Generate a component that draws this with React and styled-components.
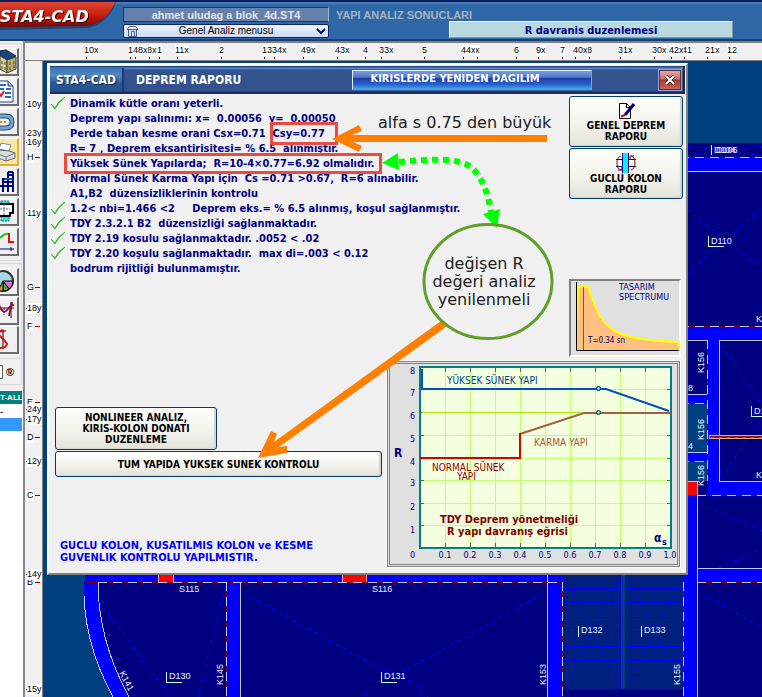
import styled, { createGlobalStyle } from "styled-components";

const tahoma = `"DejaVu Sans Condensed", "DejaVu Sans", sans-serif`;
const arial = `"Liberation Sans", Arial, sans-serif`;

const GlobalStyle = createGlobalStyle`
  * {
    box-sizing: border-box;
  }

  body {
    margin: 0;
    background: #004080;
    font-family: ${tahoma};
    font-size: 11px;
  }

  button, select {
    font-family: inherit;
  }
`;

const Page = styled.div`
  display: flex;
  flex-direction: column;
  height: 100vh;
  min-height: 600px;
  overflow: hidden;
`;

/* ---------- header ---------- */

const Header = styled.header`
  display: flex;
  height: 41px;
  flex: none;
  background: linear-gradient(#0a1e5e 0 2px, #4a7ab0 2px 4px, #2e68a6 4px 39px, #1d3f6e 39px);
`;

const Logo = styled.svg`
  width: 116px;
  height: 39px;
  flex: none;

  text {
    fill: #fff;
    font: italic bold 16px "DejaVu Sans", sans-serif;
    filter: drop-shadow(1px 1px 0 #400000);
  }
`;

const FileColumn = styled.div`
  display: flex;
  flex-direction: column;
  gap: 2px;
  width: 206px;
  margin-left: 7px;
  padding-top: 7px;
`;

const FileName = styled.div`
  height: 15px;
  background: #6680ac;
  border: 1px solid #1c3a70;
  border-right-color: #a0b4d0;
  color: #e0e4ea;
  font: bold 11px/14px ${arial};
  text-align: center;
`;

const MenuBox = styled.div`
  position: relative;
  height: 14px;

  svg {
    position: absolute;
    top: 1px;
    pointer-events: none;
  }

  svg:first-of-type {
    left: 3px;
  }

  svg:last-of-type {
    right: 2px;
  }
`;

const MenuSelect = styled.select`
  display: block;
  width: 100%;
  height: 14px;
  padding: 0;
  appearance: none;
  border: 1px solid #0a2468;
  border-radius: 2px;
  background: linear-gradient(#f0f4fd, #ccd8f4);
  color: #000;
  font: 10px/12px ${arial};
  text-align: center;
  text-align-last: center;
`;

const ResultColumn = styled.div`
  display: flex;
  flex: 1;
  flex-direction: column;
  padding: 9px 29px 0 7px;
`;

const ResultTitle = styled.div`
  height: 12px;
  color: #a8b2c0;
  font: bold 11px/12px ${arial};
`;

const ResultBox = styled.div`
  height: 17px;
  margin-left: 113px;
  background: #b9d8e0;
  border: 1px solid #f4fafa;
  border-right-color: #8098a0;
  border-bottom-color: #8098a0;
  color: #000080;
  font-size: 11px;
  font-weight: bold;
  line-height: 18px;
  text-align: center;
`;

/* ---------- frame around the drawing ---------- */

const Main = styled.div`
  display: grid;
  grid-template-columns: 25px 18px minmax(0, 1fr);
  grid-template-rows: 20px minmax(0, 1fr);
  flex: 1;
  min-height: 0;
`;

const Sidebar = styled.aside`
  display: flex;
  flex-direction: column;
  grid-row: 1 / 3;
  overflow: hidden;
  background: #f0f0f0;
  border-right: 2px solid #86868e;
`;

const ToolGroup = styled.div`
  display: flex;
  flex-direction: column;
  gap: ${props => props.$gap || 2}px;
  width: 22px;
  padding: 4px 0;
  margin-top: 2px;
  border: 1px solid #d8d8d8;
  border-left: 0;
`;

const ToolButton = styled.button`
  width: 19px;
  height: 28px;
  padding: 0;
  overflow: hidden;
  background: ${props => (props.$active ? "#f6e7a4" : "#f0f0f0")};
  border: 2px solid ${props => (props.$active ? "#e0b030" : "#6c6c6c")};
  border-top: 1px solid #fff;
  border-left: 0;

  svg {
    display: block;
  }
`;

const SmallTools = styled.div`
  display: flex;
  align-items: center;
  gap: 3px;
  width: 22px;
  height: 26px;
  border: 1px solid #d8d8d8;
  border-width: 0 1px 1px 0;
  color: #000;
  font: bold 11px/12px ${arial};
`;

const StepBox = styled.button`
  width: 3px;
  height: 14px;
  padding: 0;
  background: #fff;
  border: 1px solid #606060;
  border-left: 0;
`;

const TabLabel = styled.div`
  width: 22px;
  height: 13px;
  margin-top: 6px;
  background: #008080;
  color: #fff;
  font: bold 8px/13px ${arial};
  text-align: right;
  white-space: nowrap;
`;

const LayerList = styled.ul`
  flex: 1;
  margin: 1px 0 0;
  padding: 0;
  background: #fff;
  list-style: none;
`;

const LayerItem = styled.li`
  width: 22px;
  height: 13px;
  background: ${props => (props.$selected ? "#3399ff" : "#fff")};
  color: #000;
  font: 10px/13px ${arial};
`;

const TopRuler = styled.div`
  position: relative;
  grid-column: 2 / 4;
  overflow: hidden;
  background: #f0f0f0;
  border-top: 2px solid #808080;
  border-bottom: 1px solid #808080;
`;

const LeftRuler = styled.div`
  position: relative;
  overflow: hidden;
  background: #f0f0f0;
  border-right: 1px solid #808080;
`;

const Mark = styled.span`
  position: absolute;
  background: #fff;
  color: #000;
  font: 9px/11px ${arial};
`;

const TopMark = styled(Mark)`
  top: 2px;

  &::after {
    content: "";
    position: absolute;
    top: 12px;
    left: 2px;
    width: 1px;
    height: 2px;
    background: #800000;
  }
`;

const LeftMark = styled(Mark)`
  left: 2px;

  &::after {
    content: "";
    position: absolute;
    top: 5px;
    left: ${props => (props.$axis ? "8px" : "-1px")};
    width: ${props => (props.$axis ? "5px" : "1px")};
    height: 1px;
    background: #800000;
  }
`;

const Canvas = styled.main`
  position: relative;
  overflow: hidden;
  padding: 2px 74px 0 4px;
  background: #004080;
`;

const Layer = styled.svg`
  position: absolute;
  inset: 0;
  width: 100%;
  height: 100%;
  pointer-events: none;
`;

/* ---------- dialog ---------- */

const Dialog = styled.section`
  position: relative;
  padding: 1px 1px 6px;
  background: #f0f0f0;
  border: 2px solid #fff;
  border-right-color: #808080;
  border-bottom-color: #808080;
`;

const TitleBar = styled.div`
  display: flex;
  align-items: center;
  height: 28px;
  background: linear-gradient(#24447c 0 1px, #5c96dc 2px, #34528e 4px 25px, #1e2e5c 26px);
  border-right: 2px solid #20284c;
`;

const Brand = styled.div`
  width: 74px;
  height: 24px;
  background: linear-gradient(#3c74b4, #5088c4 30%, #2c5c9c 60%, #24508c);
  border-right: 2px solid #20386c;
  color: #fff;
  font-size: 12px;
  font-weight: bold;
  line-height: 25px;
  text-align: center;
  text-shadow: 1px 1px 1px #102040;
`;

const Title = styled.h1`
  flex: 1;
  margin: 0 0 0 12px;
  color: #fff;
  font-size: 12px;
  font-weight: bold;
`;

const Banner = styled.button`
  width: 240px;
  height: 20px;
  margin-right: 66px;
  padding: 0 34px 2px 0;
  border: 1px solid #e8eef8;
  border-right-color: #909cb0;
  border-bottom-color: #909cb0;
  background: linear-gradient(#7c9ce0, #5078c8 35%, #1c3ca4 40%, #2c60cc 75%, #38a8e8);
  color: #fff;
  font-size: 11px;
  font-weight: bold;
  line-height: 16px;
  text-align: center;
`;

const CloseButton = styled.button`
  display: grid;
  place-items: center;
  width: 24px;
  height: 22px;
  margin-right: 1px;
  padding: 0;
  border: 1px solid #8ca0f0;
  background: linear-gradient(#e0b0a4, #c87468 45%, #b03828 50%, #c86c58);
  box-shadow: inset 0 0 0 1px #5c3040;
`;

const Upper = styled.div`
  display: flex;
  justify-content: space-between;
  padding: 2px 2px 0 0;
`;

const Report = styled.ul`
  flex: 1;
  margin: 0;
  padding: 0;
  color: #000080;
  font-size: 11px;
  font-weight: bold;
  line-height: 15px;
  list-style: none;
`;

const ReportLine = styled.li`
  display: grid;
  grid-template-columns: 20px 1fr;
  height: 15px;
  white-space: pre;

  svg {
    overflow: visible;
  }
`;

const Side = styled.div`
  display: flex;
  flex-direction: column;
  gap: 1px;
  width: 114px;
`;

const PushButton = styled.button`
  display: flex;
  flex-direction: column;
  align-items: center;
  justify-content: center;
  width: ${props => props.$width};
  height: ${props => props.$height}px;
  padding: 0;
  border: 1px solid #003c74;
  border-radius: 3px;
  background: linear-gradient(#fefefd, #f2f2ec 60%, #e2e2d8);
  box-shadow: inset -2px -1px 1px #d4d4c8;
  color: #000;
  font-size: 10px;
  font-weight: bold;
  line-height: 11px;
  white-space: pre-line;
`;

const Spectrum = styled.figure`
  width: 112px;
  height: 78px;
  margin: 79px 0 0;
  background: #e0e0e0;
  border: 2px solid #808080;
  border-right-color: #fff;
  border-bottom-color: #fff;
`;

const Lower = styled.div`
  display: flex;
  justify-content: space-between;
  padding: 4px 5px 0 5px;
`;

const Actions = styled.div`
  display: flex;
  flex-direction: column;
  gap: 1px;
  padding-top: 46px;
`;

const Notice = styled.p`
  margin: 62px 0 0 5px;
  color: #0000ff;
  font-size: 11px;
  font-weight: bold;
  line-height: 12px;
`;

const ChartPanel = styled.figure`
  width: 293px;
  height: 206px;
  margin: 0;
  background: #e0e0e0;
  border: 3px double #808080;
  outline: 1px solid #fff;
`;

const Drawing = styled.svg`
  display: block;
  overflow: visible;

  text {
    font-family: ${tahoma};
  }
`;

const NoteText = styled.text`
  fill: #202020;
  font: 16px "DejaVu Sans", sans-serif;
`;

const PlanText = styled.text`
  fill: #e8f0f8;
  font: 9px ${arial};
`;

const topMarks = [
    [84, "10x"], [157, "1"], [147, "8x"], [133, "48x"], [128, "1"], [175, "11x"], [219, "2"],
    [272, "34x"], [262, "13"], [301, "49x"], [335, "43x"], [363, "4"], [379, "33x"], [422, "5"],
    [475, "x"], [461, "44x"], [514, "6"], [536, "9x"], [560, "7"], [587, "8"], [573, "40x"],
    [618, "31x"], [652, "30x"], [682, "41"], [669, "42x"], [705, "21x"], [727, "12"],
];

const leftMarks = [
    [104, "10y"], [133, "23y"], [142, "16y"], [157, "H"], [213, "11y"], [287, "G"], [308, "18y"],
    [326, "F"], [402, "E"], [409, "24y"], [419, "17y"], [437, "D"], [461, "12y"], [495, "C"],
    [582, "B"], [574, "14y"], [689, "15y"],
];

const report = [
    [true, "Dinamik kütle oranı yeterli."],
    [false, "Deprem yapı salınımı: x=  0.00056  y=  0.00050"],
    [false, "Perde taban kesme orani Csx=0.71  Csy=0.77"],
    [false, "R= 7 , Deprem eksantirisitesi= % 6.5  alınmıştır."],
    [false, "Yüksek Sünek Yapılarda;  R=10-4×0.77=6.92 olmalıdır."],
    [false, "Normal Sünek Karma Yapı için  Cs =0.71 >0.67,  R=6 alınabilir."],
    [false, "A1,B2  düzensizliklerinin kontrolu"],
    [true, "1.2< nbi=1.466 <2     Deprem eks.= % 6.5 alınmış, koşul sağlanmıştır."],
    [true, "TDY 2.3.2.1 B2  düzensizliği sağlanmaktadır."],
    [true, "TDY 2.19 kosulu sağlanmaktadır. .0052 < .02"],
    [true, "TDY 2.20 koşulu sağlanmaktadır.  max di=.003 < 0.12"],
    [false, "bodrum rijitliği bulunmamıştır."],
];

const tools = [
    { name: "Bina", art: <>
        <path d="M0 2 6 1 16 7 7 11 0 6Z" fill="#1c4480" stroke="#102040" />
        <path d="M0 7 7 11V24L0 20Z" fill="#d8d0a0" stroke="#404030" />
        <path d="M7 11 16 8V20L7 24Z" fill="#b8ac70" stroke="#404030" />
        <path d="M2 12v3M5 13v3M2 17v3M5 18v3M10 13v3M14 12v3M10 18v3M14 16v3" stroke="#504830" />
    </> },
    { name: "Rapor", art: <>
        <path d="M-2 2H8L13 7V23H-2Z" fill="#fff" stroke="#204080" />
        <path d="M8 2v5h5" fill="#a0b8e0" stroke="#204080" />
        <path d="M0 6h6M0 10h4M6 10h5M5 14h6M5 18h6" stroke="#3068b8" strokeWidth="2" />
        <path d="M-1 14 1 17 4 12" fill="none" stroke="#e02020" strokeWidth="2" />
    </> },
    { name: "Ekle", art: <>
        <path d="M-4 7H6Q12 7 12 13T6 19H-4" fill="none" stroke="#204c74" strokeWidth="5" />
        <path d="M-4 7H6Q12 7 12 13T6 19H-4" fill="none" stroke="#70a8d0" strokeWidth="3" />
        <path d="M0 13h2M4 13h2" stroke="#e08010" strokeWidth="2" />
    </> },
    { name: "Yazdir", active: true, art: <>
        <path d="M1 4 11 6 9 12 -1 10Z" fill="#fff" stroke="#808890" />
        <path d="M-2 11 9 12 15 14V19L6 22 -2 19Z" fill="#d8dce0" stroke="#606870" />
        <path d="M-2 15 6 18 15 14M6 18V22" fill="none" stroke="#707880" />
    </> },
    { name: "Cerceve", art: <>
        <path d="M3 23V10M8 23V3M13 23V3M8 3h5M2 10h11M0 17h13M8 6h5M3 13h10" fill="none" stroke="#000080" strokeWidth="2" />
        <path d="M5 10h7" stroke="#00c0e0" />
    </> },
    { name: "Birlesim", art: <>
        <path d="M1 2h8v20H1Z" fill="#30e0e8" stroke="#008080" strokeDasharray="2 1" />
        <path d="M-2 5H13V14H10V17H-2" fill="#fff" stroke="#000" strokeWidth="2" />
        <path d="M4 5v11M0 10h10" stroke="#606060" strokeDasharray="2 1" />
    </> },
    { name: "Diyagram", art: <>
        <path d="M0 9Q5 4 9 5" fill="none" stroke="#20c020" strokeWidth="2" />
        <path d="M9 4V13H14" fill="none" stroke="#e01010" strokeWidth="2" />
        <path d="M0 20H14M11 18v4" stroke="#000090" />
    </> },
    { name: "Pasta grafik", art: <>
        <circle cx="3" cy="12" r="10" fill="#a8d8e8" stroke="#303030" strokeWidth="2" />
        <path d="M3 12H13Q13 17 9 20Z" fill="#e868e8" stroke="#000" />
        <path d="M3 12 9 20Q7 22 3 22Z" fill="#40b040" stroke="#000" />
        <path d="M3 12V22H-2Z" fill="#f09020" stroke="#000" />
    </> },
    { name: "Moment", art: <>
        <path d="M0 10H14M11 4V20" stroke="#1010a0" />
        <path d="M-1 7Q3 17 7 12T14 7M9 18 12 4" fill="none" stroke="#a01020" strokeWidth="2" />
        <path d="M4 10V17" stroke="#2020ff" strokeDasharray="2 1" />
    </> },
    { name: "Egri", art: <>
        <path d="M3 3V22M1 4H6" stroke="#000" />
        <path d="M3 3Q-4 5 1 10T7 17Q6 21 0 21" fill="none" stroke="#e01010" strokeWidth="2" />
    </> },
];

const curveX = [0.1, 0.2, 0.3, 0.4, 0.5, 0.6, 0.7, 0.8, 0.9];
const gridY = [28, 51, 74, 97, 119, 142, 164];
const stairs = [588, 602, 617, 631, 646, 660, 675, 689];

function ToolBar({ items, gap }) {
    return (
        <ToolGroup $gap={gap}>
            {items.map(tool => (
                <ToolButton key={tool.name} aria-label={tool.name} $active={tool.active}>
                    <svg width="17" height="25" viewBox="0 0 17 25">{tool.art}</svg>
                </ToolButton>
            ))}
        </ToolGroup>
    );
}

// Floor plan, drawn in window coordinates
function Plan() {
    return (
        <Layer aria-hidden="true">
            <g transform="translate(-43 -61)" fill="none" shapeRendering="crispEdges">
                <path d="M680 143H2000V2000H680Z" fill="#000080" />
                <path d="M680 158H2000V171H680ZM680 327H2000V340H680ZM707 327h12V495h-12ZM680 394h27v9h-27ZM680 452h27v9h-27ZM719 481H2000V495H719Z" fill="#0000ff" />
                <path d="M680 404h27v48h-27ZM680 462h27v19h-27Z" fill="#004080" />
                <path d="M680 482h17V575h-17ZM697 568H2000V582H697ZM683 575h14V2000h-14Z" fill="#0000ff" />
                <path d="M680 482h17v13h-17Z" fill="#ff0000" />
                <path d="M98 582H683V2000H800L129 697Q98 640 98 582Z" fill="#000080" />
                <path d="M85 570H683V582H85ZM226 582h14V2000h-14ZM547 575h15V2000h-15Z" fill="#0000ff" />
                <path d="M84 582Q82 640 113 697H129Q98 640 98 582Z" fill="#0000ff" />
                <path d="M84 582Q82 640 113 697M129 697Q98 640 98 582" stroke="#c0c8ff" />
                <path d="M158 570h15v12h-15ZM342 570h24v12h-24Z" fill="#ff0000" stroke="#ffa0a0" />
                <path d="M563 570h120V689H563Z" fill="#002080" />
                <path d="M621 570h4V689h-4Z" fill="#004080" />
                <g stroke="#0000ff">
                    {stairs.map(y => <path key={y} d={`M563 ${y + 0.5}h57M626 ${y + 0.5}h57`} />)}
                </g>
                <path d="M620.5 570V689M625.5 570V689" stroke="#0000d0" />
                <g stroke="#c0c8ff">
                    <path d="M680 171.5H2000M680 340.5h27M719.5 481.5V340.5H2000M719 481.5H2000M680 394.5h27M680 452.5h27M680 481.5h17V2000M697 568.5H2000M240.5 582V2000M547.5 575V2000" />
                    <path d="M680 157.5H2000M680 326.5H2000M707.5 340V481M680 403.5h27M680 461.5h27M697 495.5H2000M85 582.5H562M697 582.5H2000M226.5 582V2000M562.5 582V2000M683.5 582V2000" stroke="#800000" />
                    <path d="M680 157.5H2000M680 326.5H2000M707.5 340V481M680 403.5h27M680 461.5h27M697 495.5H2000M98 582.5H562M697 582.5H2000M226.5 582V2000M562.5 582V2000M683.5 582V2000" strokeDasharray="9 6" />
                </g>
                <g stroke="#0000ff" strokeDasharray="4 4">
                    <path d="M680 204 762 268M680 280 762 208M688 146 762 156M688 156 762 146M721 345 762 405M721 478 762 418M700 504 762 531M718 568 762 549" />
                    <path d="M99 601 170 697M225 586 198 697M244 593 388 673 362 697M545 593 400 673 428 697M701 593 762 627" />
                    <path d="M565 580 618 686M618 580 565 686M628 580 681 686M681 580 628 686" />
                </g>
                <path d="M709.5 435.5H2000V438.5H709.5Z" fill="#901010" stroke="#d8b090" />
                <path d="M711 437H2000" stroke="#ff2020" strokeDasharray="3 5" />
                <g stroke="#c0ffff">
                    <path d="M708.5 236V246.5H724M711.5 145V155M751.5 406V416.5H762M166.5 672V682.5H182M381.5 672V682.5H397M578.5 626V637M641.5 626V637" />
                </g>
            </g>
            <g transform="translate(-43 -61)">
                <PlanText x="711" y="244">D110</PlanText>
                <PlanText x="714" y="153">D104</PlanText>
                <PlanText x="716" y="153">D106</PlanText>
                <PlanText x="754" y="414">D111</PlanText>
                <PlanText x="756" y="322">K157</PlanText>
                <PlanText x="756" y="478">K157</PlanText>
                <PlanText x="688" y="391">8</PlanText>
                <PlanText x="688" y="449">4</PlanText>
                <PlanText x="179" y="592">S115</PlanText>
                <PlanText x="372" y="592">S116</PlanText>
                <PlanText x="169" y="679">D130</PlanText>
                <PlanText x="384" y="679">D131</PlanText>
                <PlanText x="581" y="633">D132</PlanText>
                <PlanText x="644" y="633">D133</PlanText>
                <PlanText transform="translate(704 373) rotate(-90)">K156</PlanText>
                <PlanText transform="translate(704 440) rotate(-90)">K156</PlanText>
                <PlanText transform="translate(704 486) rotate(-90)">K156</PlanText>
                <PlanText transform="translate(223 685) rotate(-90)">K145</PlanText>
                <PlanText transform="translate(546 685) rotate(-90)">K153</PlanText>
                <PlanText transform="translate(680 685) rotate(-90)">K155</PlanText>
                <PlanText transform="translate(119 673) rotate(62)">K141</PlanText>
            </g>
        </Layer>
    );
}

// Markup drawn over the dialog: boxes, arrows and notes
function Notes() {
    return (
        <Layer>
            <g transform="translate(-43 -61)" fill="none">
                <g stroke="#ea4a40" strokeWidth="3">
                    <rect x="271.5" y="123.5" width="65" height="20" />
                    <rect x="65.5" y="154.5" width="315" height="18" />
                </g>
                <g fill="#ff8000">
                    <path d="M332 139 359 125 362 131 352 135H547V142H353L362 146 359 152Z" />
                    <path d="M258 458 271 431 277 434 274 442 441 321 446 327 279 447 287 446V453Z" />
                </g>
                <path d="M399 162 C430 159 462 157 473 169 C485 181 489 200 491 212" stroke="#d4d4d4" strokeWidth="6" strokeDasharray="6 5" transform="translate(2 2)" />
                <path d="M399 162 C430 159 462 157 473 169 C485 181 489 200 491 212" stroke="#00ff00" strokeWidth="6" strokeDasharray="6 5" />
                <path d="M382 163 398 153 399 170ZM497 228 483 214 500 209Z" fill="#00ff00" />
                <ellipse cx="488" cy="281.5" rx="64" ry="57" stroke="#60a028" strokeWidth="3" />
            </g>
            <g transform="translate(-43 -61)">
                <NoteText x="378" y="128">alfa s 0.75 den büyük</NoteText>
                <NoteText x="484" y="269" textAnchor="middle">değişen R</NoteText>
                <NoteText x="484" y="287" textAnchor="middle">değeri analiz</NoteText>
                <NoteText x="484" y="305" textAnchor="middle">yenilenmeli</NoteText>
            </g>
        </Layer>
    );
}

function SpectrumChart() {
    return (
        <Spectrum>
            <Drawing width="108" height="74">
                <path d="M6 69V39L7 6H17Q21 20 28 34Q37 48 50 53Q70 60 108 61V69Z" fill="#ffc080" />
                <path d="M6 39 7 6H17Q21 20 28 34Q37 48 50 53Q70 60 108 61V69" fill="none" stroke="#ffff00" strokeWidth="2" />
                <path d="M5.5 1V69.5H108" fill="none" stroke="#000" />
                <path d="M12.5 6V69" stroke="#c04000" />
                <g fill="#000080" fontSize="9">
                    <text x="48" y="9">TASARIM</text>
                    <text x="48" y="19">SPECTRUMU</text>
                    <text x="17" y="62" fontSize="8">T=0.34 sn</text>
                </g>
            </Drawing>
        </Spectrum>
    );
}

function BehaviourChart() {
    return (
        <ChartPanel>
            <Drawing width="287" height="200">
                <rect x="30" y="3" width="251" height="181" fill="#f4ffe0" />
                <g stroke="#c0ff70">
                    {curveX.map(v => <path key={v} d={`M${30.5 + v * 250} 4V183`} />)}
                    {gridY.map(y => <path key={y} d={`M31 ${y - 2.5}H280`} />)}
                </g>
                <g stroke="#606060">
                    {curveX.map(v => <path key={v} d={`M${30.5 + v * 250} 4v4M${30.5 + v * 250} 179v4`} />)}
                    {gridY.map(y => <path key={y} d={`M31 ${y - 2.5}h3M277 ${y - 2.5}h3`} />)}
                </g>
                <path d="M32 48.5H190" stroke="#a8e810" />
                <rect x="30" y="3" width="251" height="181" fill="none" stroke="#008080" strokeWidth="2" />
                <g fill="none" strokeWidth="2">
                    <path d="M32 5V25H216L279 47" stroke="#0050c0" />
                    <path d="M130 70 194 49H281" stroke="#a06040" />
                    <path d="M30 94H130V69" stroke="#d80000" />
                </g>
                <circle cx="208.5" cy="24.5" r="2" fill="#40ffff" stroke="#000080" />
                <circle cx="208.5" cy="48.5" r="2" fill="#40ffff" stroke="#402020" />
                <g fontSize="10">
                    <text x="57" y="20" fill="#004080">YÜKSEK SÜNEK YAPI</text>
                    <text x="144" y="82" fill="#a06040">KARMA YAPI</text>
                    <g fill="#900000">
                        <text x="42" y="107">NORMAL SÜNEK</text>
                        <text x="67" y="116">YAPI</text>
                    </g>
                </g>
                <g fill="#800000" fontSize="11" fontWeight="bold">
                    <text x="50" y="159">TDY Deprem yönetmeliği</text>
                    <text x="57" y="171">R  yapı davranış eğrisi</text>
                </g>
                <g fill="#000080" fontSize="9">
                    {[8, 7, 6, 5, 4, 3, 2, 1].map((n, i) => <text key={n} x="20" y={10 + [0, 22, 45, 68, 91, 112, 136, 159][i]}>{n}</text>)}
                    <text x="20" y="194">0</text>
                    {curveX.map(v => <text key={v} x={30 + v * 250} y="194" textAnchor="middle">{v.toFixed(1)}</text>)}
                    <text x="280" y="194" textAnchor="middle">1.0</text>
                </g>
                <g fill="#000080" fontWeight="bold">
                    <text x="4" y="93" fontSize="12">R</text>
                    <text x="264" y="178" fontSize="12">α</text>
                    <text x="272" y="181" fontSize="9">s</text>
                </g>
            </Drawing>
        </ChartPanel>
    );
}

export default function App() {
    return (
        <Page>
            <GlobalStyle />
            <Header>
                <Logo role="img" aria-label="STA4-CAD">
                    <defs>
                        <linearGradient id="red" x2="0" y2="1">
                            <stop offset="0" stopColor="#e04838" />
                            <stop offset="0.6" stopColor="#c01808" />
                            <stop offset="1" stopColor="#780800" />
                        </linearGradient>
                    </defs>
                    <path d="M0 2H116Q108 24 88 28L0 30Z" fill="#102850" opacity="0.5" />
                    <path d="M0 2H115Q107 23 86 26L0 27Z" fill="url(#red)" />
                    <text x="0" y="22">STA4-CAD</text>
                </Logo>
                <FileColumn>
                    <FileName>ahmet uludag a blok_4d.ST4</FileName>
                    <MenuBox>
                        <MenuSelect aria-label="Menu" defaultValue="genel">
                            <option value="genel">Genel Analiz menusu</option>
                        </MenuSelect>
                        <svg width="13" height="12" fill="none" stroke="#4c5c90">
                            <path d="M1 4.5 3.5 1.5H9.5L12 4.5ZM2.5 5V11.5H10.5V5M5.5 11V6.5H8.5V11" />
                        </svg>
                        <svg width="12" height="12" fill="none" stroke="#001c60" strokeWidth="2">
                            <path d="M2 4 6 8 10 4" />
                        </svg>
                    </MenuBox>
                </FileColumn>
                <ResultColumn>
                    <ResultTitle>YAPI ANALIZ SONUCLARI</ResultTitle>
                    <ResultBox>R davranis duzenlemesi</ResultBox>
                </ResultColumn>
            </Header>
            <Main>
                <Sidebar>
                    <ToolBar items={tools.slice(0, 7)} />
                    <ToolBar items={tools.slice(7)} gap={1} />
                    <SmallTools>
                        <StepBox aria-label="Adim" />
                        ®
                    </SmallTools>
                    <TabLabel>T-ALL</TabLabel>
                    <LayerList>
                        <LayerItem>-</LayerItem>
                        <LayerItem $selected />
                    </LayerList>
                </Sidebar>
                <TopRuler>
                    {topMarks.map(([x, label]) => (
                        <TopMark key={x} style={{ left: x - 25 }}>{label}</TopMark>
                    ))}
                </TopRuler>
                <LeftRuler>
                    {leftMarks.map(([y, label]) => (
                        <LeftMark key={y} $axis={label.length === 1} style={{ top: y - 66 }}>{label}</LeftMark>
                    ))}
                </LeftRuler>
                <Canvas>
                    <Plan />
                    <Dialog aria-label="Deprem raporu">
                        <TitleBar>
                            <Brand>STA4-CAD</Brand>
                            <Title>DEPREM RAPORU</Title>
                            <Banner>KIRISLERDE YENIDEN DAGILIM</Banner>
                            <CloseButton aria-label="Kapat">
                                <svg width="12" height="10">
                                    <path d="M2 1 10 9M10 1 2 9" stroke="#402028" strokeWidth="4" />
                                    <path d="M2 1 10 9M10 1 2 9" stroke="#fff" strokeWidth="2" />
                                </svg>
                            </CloseButton>
                        </TitleBar>
                        <Upper>
                            <Report>
                                {report.map(([ok, text]) => (
                                    <ReportLine key={text}>
                                        {ok ? (
                                            <svg width="18" height="15">
                                                <path d="M1 8 5 12Q8 5 15 1Q8 7 5 13Z" fill="#40c030" stroke="#40c030" />
                                            </svg>
                                        ) : <span />}
                                        <span>{text}</span>
                                    </ReportLine>
                                ))}
                            </Report>
                            <Side>
                                <PushButton $width="114px" $height={51}>
                                    <svg width="18" height="18" fill="none">
                                        <path d="M2.5 1.5H9.5L13.5 5.5V16.5H2.5Z" fill="#fff" stroke="#000" />
                                        <path d="M9.5 1.5V5.5H13.5" stroke="#000" />
                                        <path d="M8 13 17 2" stroke="#000080" strokeWidth="3" />
                                        <path d="M4 14.5 8 13" stroke="#c00020" strokeWidth="2" />
                                    </svg>
                                    {"GENEL DEPREM\nRAPORU"}
                                </PushButton>
                                <PushButton $width="114px" $height={51}>
                                    <svg width="22" height="20" fill="none">
                                        <path d="M1 6.5H7.5M1 13.5H7.5M14 6.5H21M14 13.5H21M7.5 0V20M13.5 0V20" stroke="#000080" />
                                        <path d="M8 0h5v20H8Z" fill="#00f0ff" />
                                        <path d="M6 3Q2 4 2 10T6 17M16 17Q20 16 20 10T16 3" stroke="#800000" />
                                        <path d="M3 17H7V14M19 3H15V6" stroke="#800000" />
                                    </svg>
                                    {"GUCLU KOLON\nRAPORU"}
                                </PushButton>
                                <SpectrumChart />
                            </Side>
                        </Upper>
                        <Lower>
                            <Actions>
                                <PushButton $width="162px" $height={43}>
                                    {"NONLINEER ANALIZ,\nKIRIS-KOLON DONATI\nDUZENLEME"}
                                </PushButton>
                                <PushButton $width="327px" $height={26}>
                                    TUM YAPIDA YUKSEK SUNEK KONTROLU
                                </PushButton>
                                <Notice>
                                    GUCLU KOLON, KUSATILMIS KOLON ve KESME<br />
                                    GUVENLIK KONTROLU YAPILMISTIR.
                                </Notice>
                            </Actions>
                            <BehaviourChart />
                        </Lower>
                    </Dialog>
                    <Notes />
                </Canvas>
            </Main>
        </Page>
    );
}
